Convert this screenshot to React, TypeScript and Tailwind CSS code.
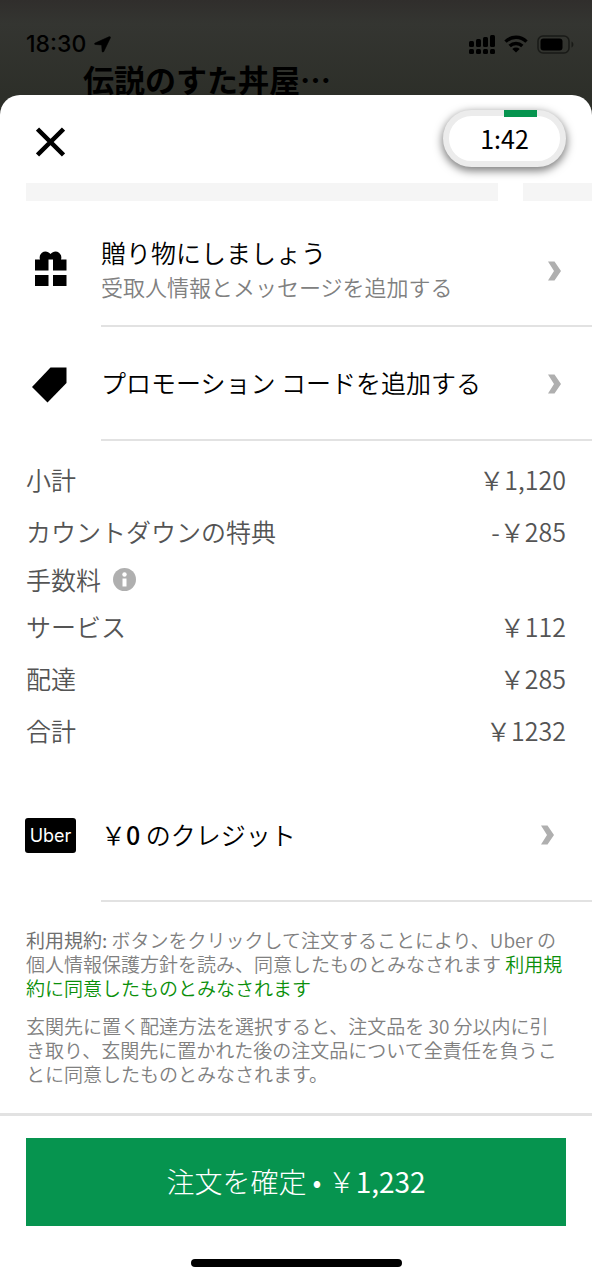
import type { ReactNode } from "react";

type Charge = {
    label: string;
    amount?: string;
    info?: boolean;
};

const charges: Charge[] = [
    { label: "小計", amount: "￥1,120" },
    { label: "カウントダウンの特典", amount: "-￥285" },
    { label: "手数料", info: true },
    { label: "サービス", amount: "￥112" },
    { label: "配達", amount: "￥285" },
    { label: "合計", amount: "￥1232" },
];

function StatusBar() {
    return (
        <div className="flex h-[28px] items-center justify-between pl-[26px] pr-[18px]">
            <div className="flex items-center gap-[8px]">
                <span className="font-['Inter',sans-serif] text-[23px] font-medium leading-[28px]">18:30</span>
                <svg width="17" height="17" viewBox="0 0 17 17" aria-hidden="true">
                    <path d="M15 .8 1.200 7c-1 .5-.8 1.400.2 1.500l6.300.4.4 6.300c.1 1 1.200 1.200 1.700.2L16.300 2C16.700.9 16 .4 15 .8z" fill="currentColor" stroke="currentColor" strokeWidth=".6" />
                </svg>
            </div>
            <div className="flex items-center gap-[9px]">
                <svg width="26" height="19" viewBox="0 0 26 19" fill="currentColor" aria-hidden="true">
                    <rect x="0" y="6" width="5" height="6" rx="1.500" />
                    <rect x="7" y="4" width="5" height="8" rx="1.500" />
                    <rect x="14" y="2" width="5" height="10" rx="1.500" />
                    <rect x="21" y="0" width="5" height="12" rx="1.500" />
                    <rect x="0" y="14" width="5" height="5" rx="1.500" />
                    <rect x="7" y="14" width="5" height="5" rx="1.500" />
                    <rect x="14" y="14" width="5" height="5" rx="1.500" />
                    <rect x="21" y="14" width="5" height="5" rx="1.500" />
                </svg>
                <svg width="24" height="18" viewBox="0 0 24 18" fill="none" stroke="currentColor" strokeWidth="3.400" aria-hidden="true">
                    <path d="M1.500 6.600a15 15 0 0 1 21 0" />
                    <path d="M5.700 11a9.200 9.200 0 0 1 12.600 0" />
                    <path d="M12 17.600l-3.700-3.700a5.400 5.400 0 0 1 7.400 0z" fill="currentColor" stroke="none" />
                </svg>
                <svg width="37" height="19" viewBox="0 0 37 19" aria-hidden="true">
                    <rect x="1" y="1" width="31" height="17" rx="5" fill="none" stroke="#191a17" strokeWidth="1.500" />
                    <rect x="3.500" y="3.500" width="22" height="12" rx="3" fill="currentColor" />
                    <path d="M34.500 6.500c2.500 1 2.500 5 0 6z" fill="#191a17" />
                </svg>
            </div>
        </div>
    );
}

function Chevron() {
    return (
        <svg width="13" height="20" viewBox="0 0 13 20" className="shrink-0" aria-hidden="true">
            <path d="M0 0.500h6.500L13 10l-6.500 9.500H0L6 10z" fill="#afafaf" />
        </svg>
    );
}

function ActionRow({ icon, children, className }: { icon: ReactNode; children: ReactNode; className: string }) {
    return (
        <button type="button" className={`flex w-full items-stretch text-left ${className}`}>
            <span className="flex w-[101px] shrink-0 items-center pl-[25px]">{icon}</span>
            <span className="flex min-w-0 flex-1 items-center justify-between border-b-2 border-[#e2e2e2]">
                {children}
            </span>
        </button>
    );
}

function GiftIcon() {
    return (
        <svg width="50" height="36" viewBox="0 0 50 36" aria-hidden="true">
            <path d="M10 8.500h5C13.500 4 17 .5 20.500.5c2 0 3.500 1 5 2.500 1.500-1.500 3-2.500 5-2.500 3.500 0 7 3.500 5.500 8h5.500v11H28V8.500h-4.500v11H10z" />
            <path d="M10 24h13.500v11H10zM28 24h13.500v11H28z" />
        </svg>
    );
}

function TagIcon() {
    return (
        <svg width="50" height="36" viewBox="0 0 50 36" aria-hidden="true">
            <path d="M25.500 0.500h16v15.500L22.500 35.500 7 20z" />
        </svg>
    );
}

export default function App() {
    return (
        <div className="flex flex-col bg-[#2d2f29] font-['Noto_Sans_CJK_JP',sans-serif] font-[350] text-black" lang="ja">
            <header className="h-[95px] overflow-hidden bg-linear-to-b from-[#302e2c] via-[#343531] via-25% to-[#2d2f29] pt-[30px]">
                <StatusBar />
                <h1 className="pl-[83px] text-[31px] font-bold leading-[42px]">伝説のすた丼屋…</h1>
            </header>

            <main className="rounded-t-[20px] bg-white">
                <div className="flex h-[88px] items-start justify-between pl-[36px] pr-[26px] pt-[15px]">
                    <button type="button" aria-label="閉じる" className="mt-[17px]">
                        <svg width="29" height="30" viewBox="0 0 29 30" stroke="currentColor" strokeWidth="4.500" aria-hidden="true">
                            <path d="M1.500 2l26 26M27.500 2l-26 26" />
                        </svg>
                    </button>
                    <div className="relative flex h-[57px] w-[123px] items-center justify-center rounded-full border-[6px] border-[#ececec] bg-white shadow-[0_3px_9px_1px_rgba(0,0,0,0.5)]">
                        <span className="absolute -top-[6px] left-[55px] h-[7px] w-[33px] bg-[#06944f]" />
                        <time className="pb-[2px] text-[25px] font-normal leading-[30px]">1:42</time>
                    </div>
                </div>

                <div className="flex gap-[25px] pl-[26px]">
                    <div className="h-[18px] flex-1 bg-[#f5f5f5]" />
                    <div className="h-[18px] w-[69px] bg-[#f5f5f5]" />
                </div>

                <ActionRow icon={<GiftIcon />} className="h-[126px] pt-[10px]">
                    <span className="flex flex-col">
                        <span className="text-[25px] leading-[36px]">贈り物にしましょう</span>
                        <span className="text-[22px] leading-[32px] text-[#808080]">受取人情報とメッセージを追加する</span>
                    </span>
                    <span className="pr-[31px] pt-[6px]"><Chevron /></span>
                </ActionRow>
                <ActionRow icon={<TagIcon />} className="h-[114px] pt-[2px]">
                    <span className="pb-[4px] text-[25px] leading-[36px]">プロモーション コードを追加する</span>
                    <span className="pr-[31px]"><Chevron /></span>
                </ActionRow>

                <dl className="px-[26px] pt-[13px] text-[25px] text-[#545454]">
                    {charges.map((charge) => (
                        <div
                            key={charge.label}
                            className={`flex items-center justify-between ${charge.info ? "h-[43px]" : "h-[52px]"}`}
                        >
                            <dt className="flex items-center gap-[12px]">
                                {charge.label}
                                {charge.info && (
                                    <button type="button" aria-label="手数料について">
                                        <svg width="23" height="23" viewBox="0 0 23 23" aria-hidden="true">
                                            <circle cx="11.500" cy="11.500" r="11.500" fill="#afafaf" />
                                            <circle cx="11.500" cy="6.500" r="2.200" fill="#fff" />
                                            <path d="M9.500 10.500h4V18.500h-4z" fill="#fff" />
                                        </svg>
                                    </button>
                                )}
                            </dt>
                            {charge.amount && <dd>{charge.amount}</dd>}
                        </div>
                    ))}
                </dl>

                <ActionRow
                    icon={
                        <span className="flex h-[35px] w-[51px] items-center justify-center rounded-[3px] bg-black font-['Inter',sans-serif] text-[18px] font-normal leading-[24px] text-white">
                            Uber
                        </span>
                    }
                    className="mt-[12px] h-[133px]"
                >
                    <span className="pb-[2px] text-[25px] leading-[36px]">
                        ￥<span className="font-medium">0</span> のクレジット
                    </span>
                    <span className="pr-[38px]"><Chevron /></span>
                </ActionRow>

                <section className="flex flex-col gap-[14px] px-[26px] pb-[27px] pt-[26px] text-[19px] leading-[24px] text-[#808080]">
                    <p>
                        <span className="font-normal text-[#707070]">利用規約:</span> ボタンをクリックして注文することにより、Uber の個人情報保護方針を読み、同意したものとみなされます{" "}
                        <a href="#terms" className="text-[#0a8f0a]">利用規約に同意したものとみなされます</a>
                    </p>
                    <p>玄関先に置く配達方法を選択すると、注文品を 30 分以内に引き取り、玄関先に置かれた後の注文品について全責任を負うことに同意したものとみなされます。</p>
                </section>

                <footer className="flex flex-col items-center border-t-[3px] border-[#e2e2e2] px-[26px] pb-[13px] pt-[22px]">
                    <button type="button" className="h-[88px] w-full bg-[#06944f] pb-[2px] text-[28px] font-light text-white">
                        注文を確定 • ￥<span className="font-normal">1,232</span>
                    </button>
                    <div className="mt-[33px] h-[8px] w-[211px] rounded-full bg-black" />
                </footer>
            </main>
        </div>
    );
}
